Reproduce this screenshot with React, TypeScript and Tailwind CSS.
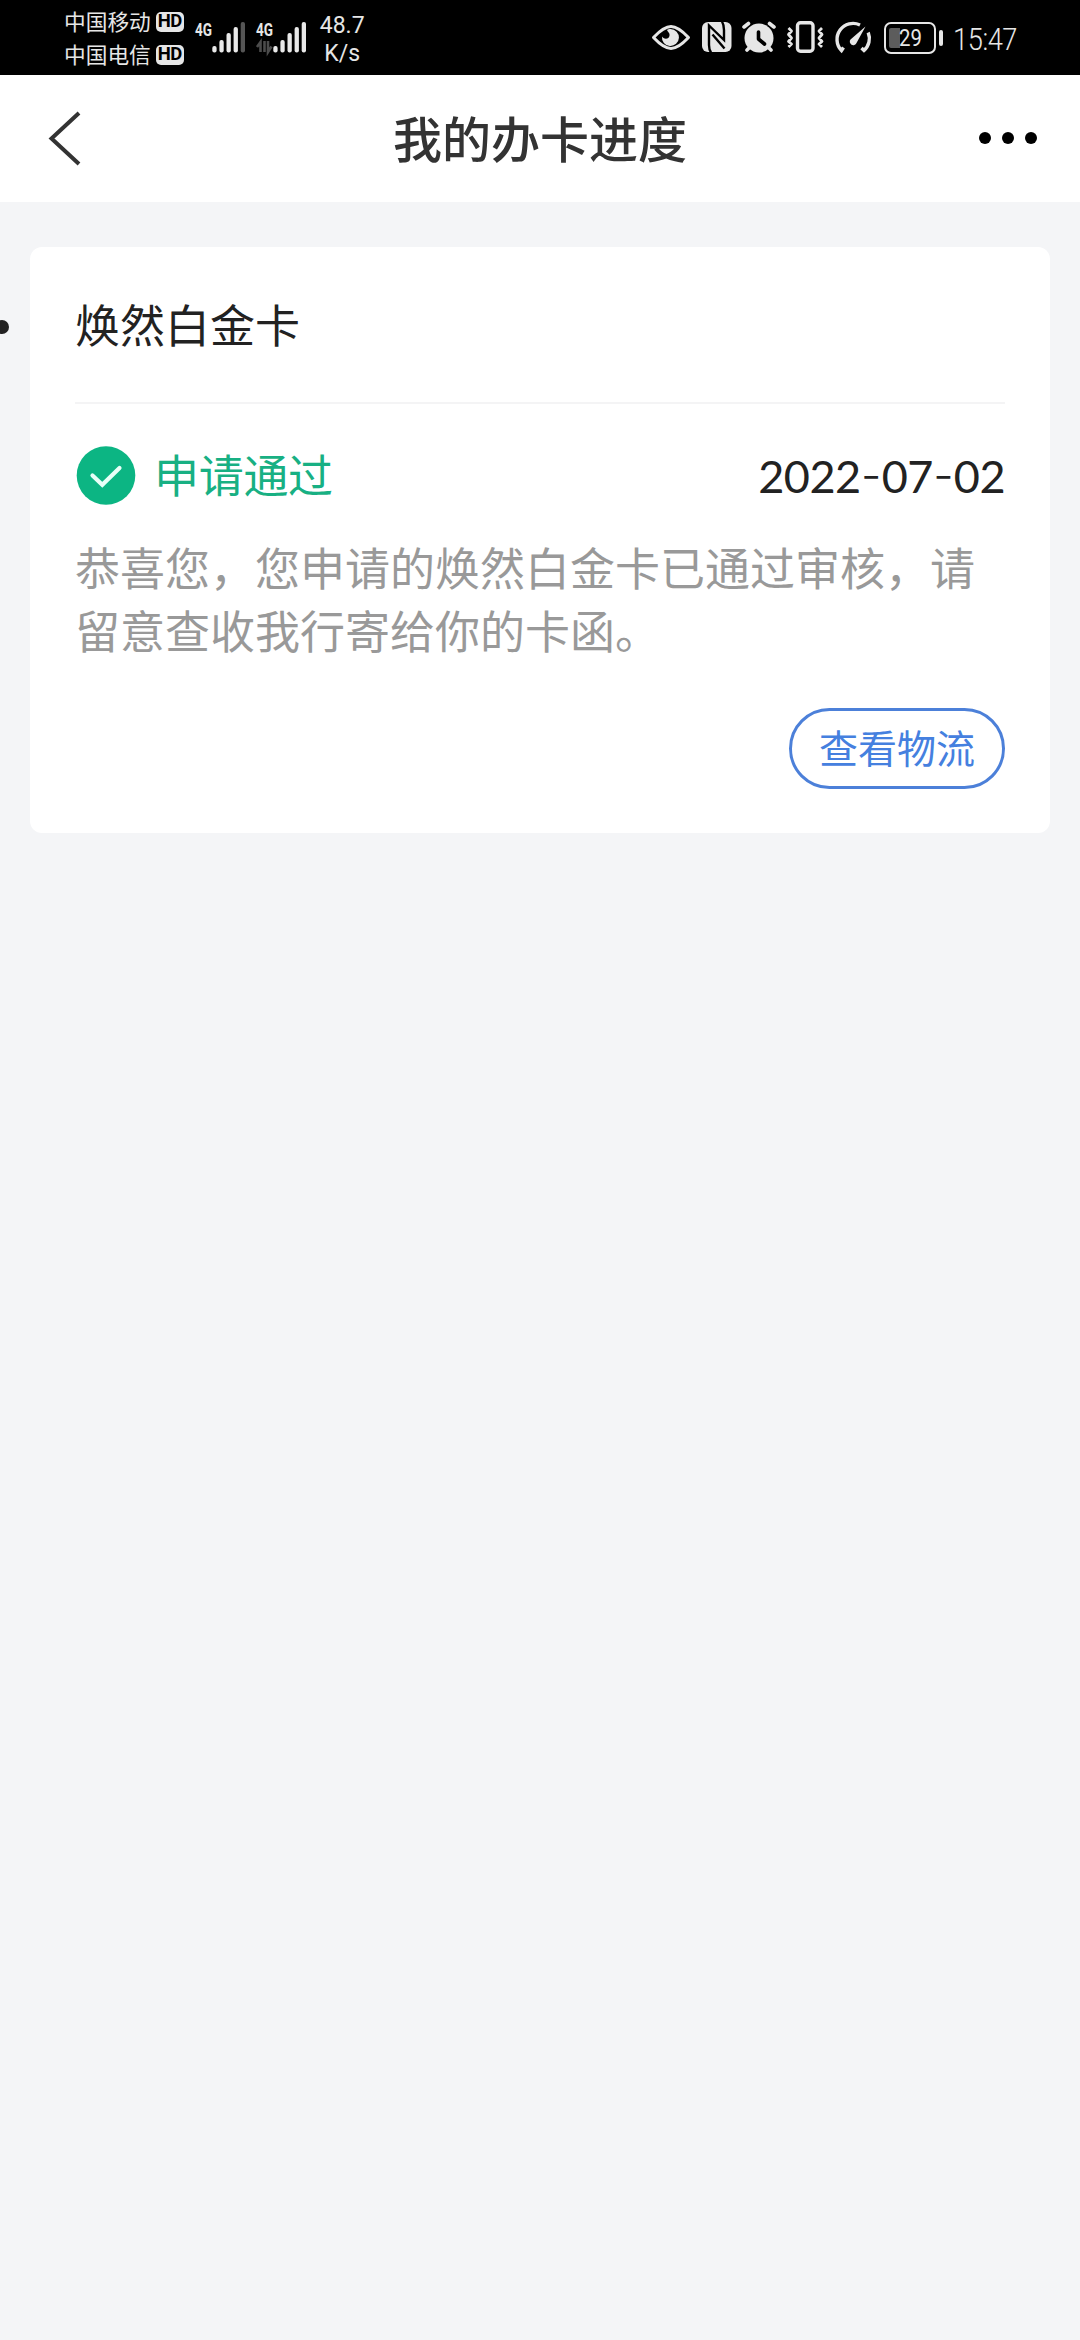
const CJK = "font-['Noto_Sans_CJK_SC',sans-serif]";

interface Application {
  name: string;
  status: string;
  date: string;
  message: string;
}

const applications: Application[] = [
  {
    name: "焕然白金卡",
    status: "申请通过",
    date: "2022-07-02",
    message: "恭喜您，您申请的焕然白金卡已通过审核，请留意查收我行寄给你的卡函。",
  },
];

const Carrier = ({ name }: { name: string }) => (
  <div className="flex items-center gap-[5px] h-[33px]">
    <span className="-mt-[3px] text-[21.7px] leading-[33px] whitespace-nowrap">{name}</span>
    <span className="flex items-center justify-center w-7 h-5 rounded-[5px] bg-[#e6e6e6] text-black font-['Roboto',sans-serif] font-bold text-[18.5px] leading-none tracking-[-0.5px]">
      HD
    </span>
  </div>
);

const bars = [46, 40, 33, 27, 22];

const Signal = ({ level, data }: { level: number; data?: boolean }) => (
  <svg width="54" height="75" viewBox="0 0 54 75">
    <text
      x="1"
      y="36"
      textLength="17"
      lengthAdjust="spacingAndGlyphs"
      className="font-['Roboto',sans-serif] font-bold text-[19px]"
      fill="#e6e6e6"
    >
      4G
    </text>
    {data && (
      <path d="M5.500 52V42L2 47M9.500 41V52M13 41V52L16.500 46.500" stroke="#4c4c4c" strokeWidth="2.600" fill="none" />
    )}
    {bars.map((top, i) => (
      <rect
        key={top}
        x={18.3 + i * 7.1}
        y={top}
        width="4.300"
        height={52.5 - top}
        rx="2"
        fill={i < level ? "#e9e9e9" : "#555"}
      />
    ))}
  </svg>
);

const EyeIcon = () => (
  <svg width="42" height="75" viewBox="650 0 42 75">
    <path
      d="M653.500 37.500C661 29.500 666 26.500 671 26.500S681 29.500 688.500 37.500C681 45.500 676 48.500 671 48.500S661 45.500 653.500 37.500Z"
      fill="none"
      stroke="#e6e6e6"
      strokeWidth="3"
      strokeLinejoin="round"
    />
    <path d="M670.500 29A8.500 8.500 0 1 1 662 36.500C663 39 669 40 669.500 35.500C670 33 667.500 31.500 667 30C668 29.300 669 29 670.500 29Z" fill="#e6e6e6" />
  </svg>
);

const NfcIcon = () => (
  <svg width="34" height="75" viewBox="700 0 34 75">
    <rect x="702" y="22" width="29.500" height="30" rx="6" fill="#e6e6e6" />
    <path
      d="M711 52.500C709.300 50 709 48 709 45V25.500L724 40V30C724 26 723.500 24 722 21.500M712.500 34.500L724.500 48.500"
      fill="none"
      stroke="#000"
      strokeWidth="2.400"
    />
  </svg>
);

const AlarmIcon = () => (
  <svg width="38" height="75" viewBox="740 0 38 75">
    <circle cx="759" cy="38" r="14.500" fill="#e6e6e6" />
    <path d="M744 27L748.500 23.500M774 27L769.500 23.500M747 50L750 47M771 50L768 47" stroke="#e6e6e6" strokeWidth="3.600" strokeLinecap="round" />
    <path d="M758.500 32V39L764.500 44" fill="none" stroke="#000" strokeWidth="3.600" strokeLinecap="round" strokeLinejoin="round" />
  </svg>
);

const VibrateIcon = () => (
  <svg width="40" height="75" viewBox="785 0 40 75">
    <rect x="797.500" y="22.800" width="15.500" height="28.500" rx="3" fill="none" stroke="#e6e6e6" strokeWidth="3.400" />
    <path
      d="M788.500 28L791.500 31L788.500 34.500L791.500 38L788.500 41.500L791.500 44L788.500 47M822 28L819 31L822 34.500L819 38L822 41.500L819 44L822 47"
      fill="none"
      stroke="#e6e6e6"
      strokeWidth="2.800"
      strokeLinejoin="round"
    />
  </svg>
);

const GaugeIcon = () => (
  <svg width="40" height="75" viewBox="833 0 40 75">
    <path
      d="M860 25A16 16 0 0 0 841.500 50.500L843.500 47.500M868.200 32.500A16 16 0 0 1 864 50.500L861.500 48"
      fill="none"
      stroke="#e6e6e6"
      strokeWidth="3.400"
    />
    <path d="M865.500 26.500L856.500 43A3.500 3.500 0 1 1 850.500 39.500Z" fill="#e6e6e6" />
  </svg>
);

const Battery = () => (
  <div className="flex items-center ml-[11px] mt-[22px] h-8">
    <div className="relative flex items-center justify-center w-[52px] h-8 rounded-[7px] border-[2.5px] border-[#e6e6e6]">
      <span className="absolute left-[3px] top-1 w-[11px] h-5 rounded-l-[2px] bg-[#5c5c5c]" />
      <span className="relative font-['Roboto',sans-serif] text-[24px] leading-none scale-x-85">29</span>
    </div>
    <span className="ml-[3px] w-1 h-4 rounded-sm bg-[#e6e6e6]" />
  </div>
);

const StatusBar = () => (
  <div className="flex justify-between w-full h-[75px] bg-black text-[#e6e6e6]">
    <div className="flex pl-16">
      <div className={`flex flex-col pt-[5px] ${CJK}`}>
        <Carrier name="中国移动" />
        <Carrier name="中国电信" />
      </div>
      <div className="flex gap-[7px] ml-[10px]">
        <Signal level={4} />
        <Signal level={5} data />
      </div>
      <div className="flex flex-col items-center ml-[11px] pt-3 font-['Roboto',sans-serif] text-[23px] leading-[28px]">
        <span>48.7</span>
        <span>K/s</span>
      </div>
    </div>
    <div className="flex w-[430px]">
      <EyeIcon />
      <span className="w-2" />
      <NfcIcon />
      <span className="w-1.5" />
      <AlarmIcon />
      <span className="w-[7px]" />
      <VibrateIcon />
      <span className="w-2" />
      <GaugeIcon />
      <Battery />
      <span className="ml-[10px] origin-left scale-x-88 font-['Roboto',sans-serif] text-[31px] leading-[79px] tracking-[-0.5px] font-light">
        15:47
      </span>
    </div>
  </div>
);

const Header = ({ title }: { title: string }) => (
  <header className={`flex items-center justify-between w-full h-[127px] pl-12 pr-[43px] bg-white ${CJK}`}>
    <svg width="60" height="60" viewBox="0 0 60 60" fill="none">
      <path d="M31 4L3.500 29.500L31 55" stroke="#333" strokeWidth="4" />
    </svg>
    <h1 className="-mt-1 mr-[5px] text-[49px] leading-none font-medium text-[#333]">{title}</h1>
    <div className="flex justify-end gap-[11px] w-[60px] -mt-0.5">
      <span className="shrink-0 size-3 rounded-full bg-black" />
      <span className="shrink-0 size-3 rounded-full bg-black" />
      <span className="shrink-0 size-3 rounded-full bg-black" />
    </div>
  </header>
);

const DateText = ({ value }: { value: string }) => (
  <span className="flex font-['Lato',sans-serif] text-[45px] leading-[60px] text-[#222]">
    {value.split("").map((c, i) =>
      c === "-" ? (
        <span key={i} className="-mt-px w-[21px] text-center font-['Inter',sans-serif] font-light">
          {c}
        </span>
      ) : (
        <span key={i} className="w-[25.6px] text-center">
          {c}
        </span>
      )
    )}
  </span>
);

const ApplicationCard = ({ item }: { item: Application }) => (
  <li className="relative mx-[30px] h-[586px] px-[45px] rounded-[12px] bg-white">
    {/* list marker, half outside the screen */}
    <span className="absolute -left-[35px] top-[73px] size-[14px] rounded-full bg-[#222]" />

    <h2 className="h-[157px] border-b-2 border-[#f4f4f5] text-[45px] leading-[153px] text-[#222]">{item.name}</h2>

    <div className="flex items-center justify-between h-[60px] mt-[42px]">
      <div className="flex items-center">
        <svg width="63" height="60" viewBox="0 0 63 60" fill="none">
          <circle cx="31" cy="29.500" r="29.300" fill="#0cb583" />
          <path d="M17.500 29.500L27.300 38.800L44.500 22" stroke="#e8fff7" strokeWidth="4.200" strokeLinecap="round" />
        </svg>
        <span className="-mt-[5px] ml-4 text-[45px] leading-[60px] tracking-[-0.3px] text-[#18b083]">{item.status}</span>
      </div>
      <DateText value={item.date} />
    </div>

    <p className="mt-[29px] text-[45px] leading-[63px] text-[#999]">{item.message}</p>

    <div className="flex justify-end mt-[47px]">
      <button className="w-[216px] h-[81px] pb-1 rounded-full border-3 border-[#4c80d9] text-[39px] leading-none text-[#4580df]">
        查看物流
      </button>
    </div>
  </li>
);

const App = () => {
  return (
    <div className="w-[1080px] h-[2340px] overflow-hidden bg-[#f4f5f7]">
      <StatusBar />
      <Header title="我的办卡进度" />
      <ul className={`pt-[45px] ${CJK}`}>
        {applications.map((item) => (
          <ApplicationCard key={item.name} item={item} />
        ))}
      </ul>
    </div>
  );
};

export default App;
